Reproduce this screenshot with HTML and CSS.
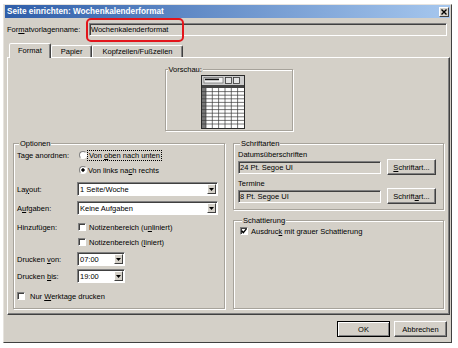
FILE: index.html
```html
<!DOCTYPE html>
<html lang="de">
<head>
  <meta charset="UTF-8">
  <title>Seite einrichten: Wochenkalenderformat</title>
  <link rel="stylesheet" href="styles.css">
</head>
<body>

<div class="dialog">
  <div class="titlebar">
    <span class="title">Seite einrichten: Wochenkalenderformat</span>
    <span class="close">
      <svg width="6" height="6" viewBox="0 0 6 6"><path d="M0.5 0.5 L5.5 5.5 M5.5 0.5 L0.5 5.5" stroke="#000" stroke-width="1.4"/></svg>
    </span>
  </div>

  <div class="name-row">
    <span class="name-label">For<u>m</u>atvorlagenname:</span>
    <div class="field readonly">Wochenkalenderformat</div>
    <div class="highlight"></div>
  </div>

  <div class="tabs">
    <div class="tab active">Format</div>
    <div class="tab">Papier</div>
    <div class="tab">Kopfzeilen/Fußzeilen</div>
  </div>

  <div class="panel">
    <div class="group preview">
      <div class="group-title">Vorschau:</div>
      <svg class="thumb" width="44" height="54" viewBox="0 0 44 54">
        <rect x="0.5" y="0.5" width="43" height="53" fill="#fff" stroke="#2a2a2a"/>
        <rect x="1" y="1" width="42" height="9" fill="#cdcdcd"/>
        <rect x="3" y="2.5" width="19" height="5.5" fill="#f2f2f2" stroke="#555" stroke-width="0.6"/>
        <rect x="4" y="3.6" width="14" height="1.6" fill="#111"/>
        <rect x="24.5" y="2.5" width="6" height="6" fill="#e4e4e4" stroke="#333" stroke-width="0.8"/>
        <rect x="32.5" y="2.5" width="6" height="6" fill="#e4e4e4" stroke="#333" stroke-width="0.8"/>
        <rect x="1" y="10" width="42" height="3" fill="#444"/>
        <rect x="1" y="13" width="4" height="40" fill="#777"/>
        <path d="M5 13V53M11.3 13V53M17.6 13V53M24 13V53M30.3 13V53M36.6 13V53
                 M1 16.6H43M1 20.2H43M1 23.8H43M1 27.4H43M1 31H43M1 34.6H43M1 38.2H43M1 41.8H43M1 45.4H43M1 49H43"
              stroke="#3a3a3a" stroke-width="0.7" fill="none"/>
      </svg>
    </div>

    <div class="columns">
      <div class="group options">
        <div class="group-title">Optionen</div>

        <div class="opt-row first">
          <span class="opt-label">Tage anordnen:</span>
          <span class="radio"></span>
          <span class="focus">Von <u>o</u>ben nach unten</span>
        </div>
        <div class="opt-row sub">
          <span class="opt-label"></span>
          <span class="radio checked"></span>
          <span>Von links na<u>c</u>h rechts</span>
        </div>

        <div class="opt-row">
          <span class="opt-label">La<u>y</u>out:</span>
          <div class="combo wide">
            <span class="combo-text">1 Seite/Woche</span>
            <span class="drop"><svg width="5" height="3" viewBox="0 0 5 3"><path d="M0 0H5L2.5 3Z"/></svg></span>
          </div>
        </div>
        <div class="opt-row">
          <span class="opt-label">A<u>u</u>fgaben:</span>
          <div class="combo wide">
            <span class="combo-text">Keine Aufgaben</span>
            <span class="drop"><svg width="5" height="3" viewBox="0 0 5 3"><path d="M0 0H5L2.5 3Z"/></svg></span>
          </div>
        </div>

        <div class="opt-row">
          <span class="opt-label">Hinzufügen:</span>
          <span class="check"></span>
          <span>Notizenbereich (u<u>n</u>liniert)</span>
        </div>
        <div class="opt-row sub">
          <span class="opt-label"></span>
          <span class="check"></span>
          <span>Notizenbereich (<u>l</u>iniert)</span>
        </div>

        <div class="opt-row time">
          <span class="opt-label">Drucken <u>v</u>on:</span>
          <div class="combo short">
            <span class="combo-text">07:00</span>
            <span class="drop"><svg width="5" height="3" viewBox="0 0 5 3"><path d="M0 0H5L2.5 3Z"/></svg></span>
          </div>
        </div>
        <div class="opt-row time">
          <span class="opt-label">Drucken <u>b</u>is:</span>
          <div class="combo short">
            <span class="combo-text">19:00</span>
            <span class="drop"><svg width="5" height="3" viewBox="0 0 5 3"><path d="M0 0H5L2.5 3Z"/></svg></span>
          </div>
        </div>

        <div class="opt-row workdays">
          <span class="check"></span>
          <span>Nur <u>W</u>erktage drucken</span>
        </div>
      </div>

      <div class="right-col">
        <div class="group fonts">
          <div class="group-title">Schriftarten</div>
          <div class="font-caption">Datumsüberschriften</div>
          <div class="font-row">
            <div class="field readonly">24 Pt. Segoe UI</div>
            <button class="btn"><u>S</u>chriftart...</button>
          </div>
          <div class="font-caption">Termine</div>
          <div class="font-row">
            <div class="field readonly">8 Pt. Segoe UI</div>
            <button class="btn">Schrift<u>a</u>rt...</button>
          </div>
        </div>

        <div class="group shading">
          <div class="group-title">Schattierung</div>
          <div class="shade-row">
            <span class="check checked">
              <svg width="6" height="6" viewBox="0 0 6 6"><path d="M0.6 2.8 L2.3 4.6 L5.4 0.9" stroke="#000" stroke-width="1.4" fill="none"/></svg>
            </span>
            <span>Ausdruc<u>k</u> mit grauer Schattierung</span>
          </div>
        </div>
      </div>
    </div>
  </div>

  <div class="footer">
    <button class="btn footer-btn default">OK</button>
    <button class="btn footer-btn">Abbrechen</button>
  </div>
</div>

</body>
</html>
```

FILE: styles.css
```css
body {
  margin: 0;
  background: #fff;
  font-family: "Liberation Sans", Arial, sans-serif;
  font-size: 7.5px;
  color: #000;
}

.dialog {
  box-sizing: border-box;
  width: 449px;
  height: 339px;
  margin: 4px 0 0 3px;
  padding: 0 1px;
  background: #d4d0c8;
  border: 1px solid;
  border-color: #e6e3de #404040 #404040 #e6e3de;
}

.titlebar {
  display: flex;
  align-items: center;
  justify-content: space-between;
  height: 13px;
  padding: 0 1px 0 2px;
  background: linear-gradient(to right, #2f5ea9, #a6c7ee);
}

.title {
  color: #fff;
  font-weight: bold;
  font-size: 8.2px;
}

.close {
  display: flex;
  align-items: center;
  justify-content: center;
  box-sizing: border-box;
  width: 10px;
  height: 10px;
  background: #d4d0c8;
  border: 1px solid;
  border-color: #fff #404040 #404040 #fff;
}

.name-row {
  position: relative;
  display: flex;
  align-items: center;
  height: 13px;
  margin: 5px 3px 0 2px;
}

.name-label {
  width: 82px;
  flex: none;
}

.field {
  box-sizing: border-box;
  height: 13px;
  line-height: 11px;
  padding: 0 1px;
  border: 1px solid;
  border-color: #808080 #fff #fff #808080;
  box-shadow: inset 1px 1px #404040;
  white-space: nowrap;
}

.field.readonly {
  background: #d4d0c8;
}

.name-row .field {
  flex: 1;
}

.highlight {
  position: absolute;
  left: 79px;
  top: -5px;
  width: 98px;
  height: 24px;
  box-sizing: border-box;
  border: 2.5px solid #e3151b;
  border-radius: 5px;
}

.tabs {
  display: flex;
  align-items: flex-end;
  height: 14px;
  margin: 7px 0 0 4px;
}

.tab {
  display: flex;
  align-items: center;
  box-sizing: border-box;
  height: 12px;
  padding: 0 9px;
  border: 1px solid;
  border-bottom: none;
  border-color: #fff #404040 transparent #fff;
  border-radius: 2px 2px 0 0;
  box-shadow: inset -1px 0 #808080;
}

.tab.active {
  position: relative;
  z-index: 1;
  height: 15px;
  margin-bottom: -1px;
  padding: 0 8px 1px;
  background: #d4d0c8;
}

.panel {
  box-sizing: border-box;
  height: 258px;
  margin-left: 2px;
  padding: 11px 5px 0 5px;
  border: 1px solid;
  border-color: #fff #404040 #404040 #fff;
  box-shadow: inset -1px -1px #808080;
}

.group {
  box-sizing: border-box;
  border: 1px solid #a7a39b;
  box-shadow: inset 1px 1px #fff, 1px 1px #fff;
}

.group-title {
  display: table;
  margin: -5px 0 0 2px;
  padding: 0 1px;
  line-height: 9px;
  background: #d4d0c8;
}

.preview {
  width: 128px;
  height: 62px;
  margin: 0 auto;
}

.thumb {
  display: block;
  margin: 1px 0 0 35px;
}

.columns {
  display: grid;
  grid-template-columns: 212px 1fr;
  gap: 8px;
  margin-top: 12px;
}

.options {
  padding: 0 0 5px 3px;
}

.opt-row {
  display: flex;
  align-items: center;
  height: 14px;
  margin-top: 5px;
  white-space: nowrap;
}

.opt-row.first {
  margin-top: 0;
}

.opt-row.sub {
  margin-top: 1px;
}

.opt-row.time {
  margin-top: 3px;
}

.opt-row.workdays {
  margin-top: 6px;
}

.opt-label {
  width: 60px;
  flex: none;
}

.radio {
  box-sizing: border-box;
  width: 8px;
  height: 8px;
  margin: 0 1px 0 2px;
  border-radius: 50%;
  background: #fff;
  border: 1px solid;
  border-color: #808080 #fff #fff #808080;
}

.radio.checked {
  background: radial-gradient(circle, #000 1.4px, #fff 1.9px);
}

.focus {
  padding: 0 1px;
  outline: 1px dotted #000;
}

.check {
  display: flex;
  align-items: center;
  justify-content: center;
  box-sizing: border-box;
  width: 8px;
  height: 8px;
  margin: 0 3px 0 1px;
  background: #fff;
  border: 1px solid;
  border-color: #808080 #fff #fff #808080;
  box-shadow: inset 1px 1px #404040;
}

.workdays .check {
  margin: 0 5px 0 0;
}

.combo {
  display: flex;
  align-items: center;
  box-sizing: border-box;
  height: 14px;
  padding: 1px 1px 1px 2px;
  background: #fff;
  border: 1px solid;
  border-color: #808080 #fff #fff #808080;
  box-shadow: inset 1px 1px #404040;
}

.combo.wide {
  width: 141px;
}

.combo.short {
  width: 48px;
}

.combo-text {
  flex: 1;
}

.drop {
  display: flex;
  align-items: center;
  justify-content: center;
  box-sizing: border-box;
  width: 9px;
  height: 10px;
  background: #d4d0c8;
  border: 1px solid;
  border-color: #fff #404040 #404040 #fff;
}

.right-col {
  display: flex;
  flex-direction: column;
}

.fonts {
  padding: 0 0 5px 4px;
}

.font-caption {
  margin-top: 2px;
  line-height: 9px;
}

.font-row + .font-caption {
  margin-top: 4px;
}

.font-row {
  display: flex;
  align-items: center;
  height: 16px;
}

.font-row .field {
  width: 143px;
}

.btn {
  box-sizing: border-box;
  height: 16px;
  padding: 0;
  font: inherit;
  color: #000;
  background: #d4d0c8;
  border: 1px solid;
  border-color: #fff #404040 #404040 #fff;
  box-shadow: inset -1px -1px #808080;
}

.font-row .btn {
  width: 49px;
  margin-left: 6px;
}

.shading {
  flex: 1;
  margin-top: 10px;
  padding-left: 6px;
}

.shade-row {
  display: flex;
  align-items: center;
  height: 12px;
}

.shade-row .check {
  margin: 0 3px 0 0;
}

.footer {
  display: flex;
  justify-content: flex-end;
  gap: 4px;
  margin-top: 6px;
  padding-right: 3px;
}

.footer-btn {
  width: 53px;
}

.footer-btn.default {
  border-color: #000;
  box-shadow: inset 1px 1px #fff, inset -1px -1px #808080;
}
```
